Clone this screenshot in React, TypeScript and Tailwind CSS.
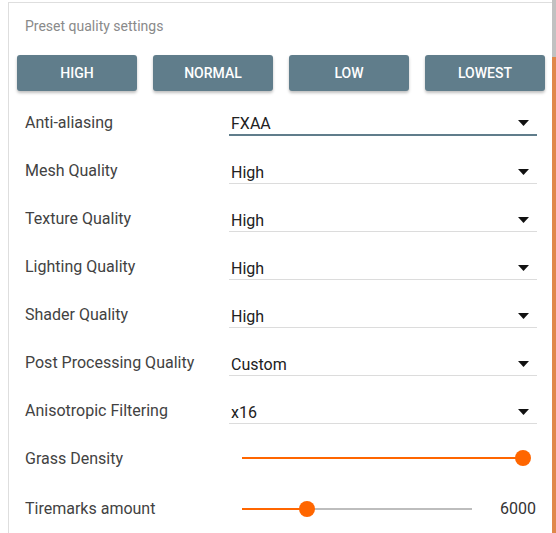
import React from "react";

const selects: { label: string; value: string; active?: boolean }[] = [
  { label: "Anti-aliasing", value: "FXAA", active: true },
  { label: "Mesh Quality", value: "High" },
  { label: "Texture Quality", value: "High" },
  { label: "Lighting Quality", value: "High" },
  { label: "Shader Quality", value: "High" },
  { label: "Post Processing Quality", value: "Custom" },
  { label: "Anisotropic Filtering", value: "x16" },
];

function Arrow() {
  return (
    <svg width="11" height="6" viewBox="0 0 11 6" className="absolute right-[8px] top-1/2 -translate-y-1/2">
      <polygon points="0,0 11,0 5.5,6" fill="#111" />
    </svg>
  );
}

function Slider({ pct, end }: { pct: number; end: number }) {
  return (
    <div className="relative h-[16px]" style={{ width: end }}>
      <div className="absolute left-0 right-0 top-1/2 h-[2px] -translate-y-1/2 bg-[#bdbdbd]" />
      <div className="absolute left-0 top-1/2 h-[2px] -translate-y-1/2 bg-[#ff6600]" style={{ width: `${pct}%` }} />
      <div
        className="absolute top-1/2 h-[16px] w-[16px] -translate-x-1/2 -translate-y-1/2 rounded-full bg-[#ff6600]"
        style={{ left: `${pct}%` }}
      />
    </div>
  );
}

export default function App() {
  return (
    <div
      className="flex h-[533px] w-[556px] overflow-hidden bg-white"
      style={{ fontFamily: "Roboto, 'Liberation Sans', sans-serif" }}
    >
      <div className="flex-1 pl-[8px] pt-[2px]">
        <div className="h-full border-l border-t border-[#dedede]">
          <div className="pl-[16px] pt-[13px] text-[14px] leading-[20px] text-[#8a8a8a]">Preset quality settings</div>
          <div className="mt-[19px] grid grid-cols-4 gap-4 pl-[8px] pr-[7px]">
            {["HIGH", "NORMAL", "LOW", "LOWEST"].map((b) => (
              <div
                key={b}
                className="flex h-[36px] items-center justify-center rounded-[3px] bg-[#607d8b] text-[14px] font-medium text-white shadow-[0_2px_3px_rgba(0,0,0,0.25)]"
              >
                {b}
              </div>
            ))}
          </div>
          <div className="mt-[9px] pl-[16px] pr-[15px]">
            {selects.map((s) => (
              <div key={s.label} className="flex h-[48px] items-center">
                <div className="w-[204px] -mt-[2px] text-[16px] leading-[20px] text-[#424242]">{s.label}</div>
                <div
                  className={
                    "relative flex h-[23px] flex-1 items-center pl-[2px] text-[16px] leading-[20px] text-[#212121] " +
                    (s.active ? "border-b-2 border-[#607d8b]" : "border-b border-[#dcdcdc]")
                  }
                >
                  <span className="mt-[2px]">{s.value}</span>
                  <Arrow />
                </div>
              </div>
            ))}
            <div className="flex h-[45px] items-center">
              <div className="w-[217px] text-[16px] leading-[20px] text-[#424242]">Grass Density</div>
              <div className="-mt-[2px] flex items-center">
                <Slider pct={100} end={281} />
              </div>
            </div>
            <div className="flex h-[55px] items-center">
              <div className="w-[217px] text-[16px] leading-[20px] text-[#424242]">Tiremarks amount</div>
              <Slider pct={28.3} end={230} />
              <div className="flex-1 pr-[1px] text-right text-[16px] leading-[20px] text-[#333]">6000</div>
            </div>
          </div>
        </div>
      </div>
      <div className="flex w-[4px] flex-col">
        <div className="h-[57px] bg-[#c1c1c1]" />
        <div className="flex-1 bg-[#e0884b]" />
      </div>
    </div>
  );
}
